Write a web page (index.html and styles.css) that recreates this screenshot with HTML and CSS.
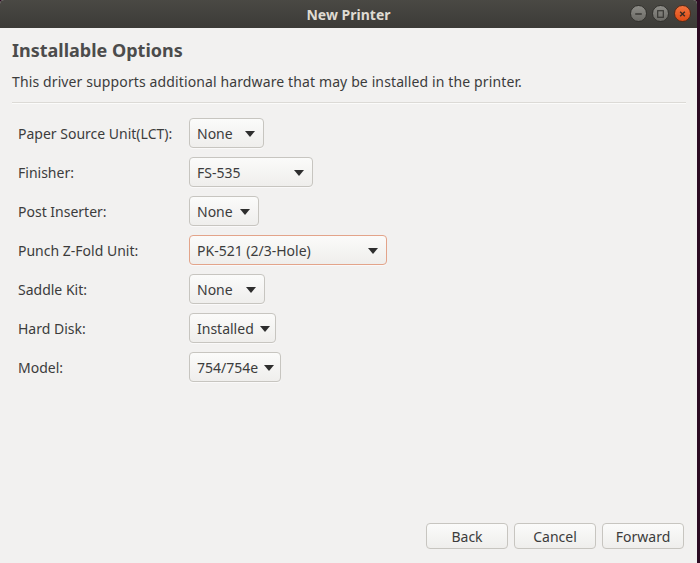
FILE: index.html
```html
<!DOCTYPE html>
<html>
<head>
<meta charset="utf-8">
<title>New Printer</title>
<link rel="stylesheet" href="styles.css">
</head>
<body>
<div class="window">
  <div class="titlebar">
    <span class="title">New Printer</span>
    <div class="wm-buttons">
      <span class="wm wm-min"><svg width="16" height="16" viewBox="0 0 16 16"><path d="M4.5 8h7" stroke="#3a3935" stroke-width="1.6"/></svg></span>
      <span class="wm wm-max"><svg width="16" height="16" viewBox="0 0 16 16"><rect x="5" y="4.5" width="6" height="7" fill="none" stroke="#3a3935" stroke-width="1.3"/></svg></span>
      <span class="wm wm-close"><svg width="16" height="16" viewBox="0 0 16 16"><path d="M5.5 5.5l5 5M10.5 5.5l-5 5" stroke="#3a2a22" stroke-width="1.5"/></svg></span>
    </div>
  </div>
  <div class="content">
    <h1 class="heading">Installable Options</h1>
    <p class="desc">This driver supports additional hardware that may be installed in the printer.</p>
    <div class="sep"></div>
    <div class="options">
      <span class="label">Paper Source Unit(LCT):</span>
      <div class="combo w-75"><span>None</span><i class="arrow"></i></div>
      <span class="label">Finisher:</span>
      <div class="combo w-124"><span>FS-535</span><i class="arrow"></i></div>
      <span class="label">Post Inserter:</span>
      <div class="combo w-70"><span>None</span><i class="arrow"></i></div>
      <span class="label">Punch Z-Fold Unit:</span>
      <div class="combo w-198 focused"><span>PK-521 (2/3-Hole)</span><i class="arrow"></i></div>
      <span class="label">Saddle Kit:</span>
      <div class="combo w-76"><span>None</span><i class="arrow"></i></div>
      <span class="label">Hard Disk:</span>
      <div class="combo w-87"><span>Installed</span><i class="arrow"></i></div>
      <span class="label">Model:</span>
      <div class="combo w-92"><span>754/754e</span><i class="arrow"></i></div>
    </div>
    <div class="spacer"></div>
    <div class="actions">
      <button class="btn">Back</button>
      <button class="btn">Cancel</button>
      <button class="btn">Forward</button>
    </div>
  </div>
</div>
</body>
</html>
```
FILE: styles.css
```css
* { box-sizing: border-box; }
html, body {
  margin: 0;
  padding: 0;
  width: 700px;
  height: 563px;
  overflow: hidden;
  background: #2c0b22;
}
body {
  font-family: "Noto Sans", "Open Sans", sans-serif;
  font-size: 14px;
  color: #3c3c3c;
}
.window {
  width: 697px;
  height: 563px;
  background: #f2f1f0;
  border-top-left-radius: 4px;
  border-top-right-radius: 4px;
  display: flex;
  flex-direction: column;
  overflow: hidden;
}
.titlebar {
  height: 28px;
  flex: none;
  background: linear-gradient(#4a4944, #3c3b37);
  display: flex;
  align-items: center;
  justify-content: center;
  position: relative;
}
.title {
  color: #dfdbd2;
  font-weight: bold;
  font-size: 14px;
}
.wm-buttons {
  position: absolute;
  right: 6px;
  top: 5px;
  display: flex;
  gap: 5px;
}
.wm {
  width: 17px;
  height: 17px;
  border-radius: 50%;
  display: flex;
  align-items: center;
  justify-content: center;
  background: linear-gradient(#8d8c87, #6c6b66);
  border: 1px solid #33322e;
}
.wm-close {
  background: linear-gradient(#f2733e, #de4c16);
  border-color: #5a2a16;
}
.content {
  flex: 1;
  display: flex;
  flex-direction: column;
  padding: 0 11px 14px 12px;
}
.heading {
  margin: 11px 0 0;
  font-size: 18px;
  font-weight: bold;
  line-height: 22px;
  color: #4c4c4c;
}
.desc {
  margin: 11px 0 0;
  line-height: 20px;
  letter-spacing: 0.12px;
  color: #3c3c3c;
}
.sep {
  margin-top: 10px;
  height: 2px;
  border-top: 1px solid #dcdad6;
  border-bottom: 1px solid #fbfbfa;
}
.options {
  margin-top: 14px;
  padding-left: 6px;
  display: grid;
  grid-template-columns: 171px auto;
  grid-auto-rows: 30px;
  row-gap: 9px;
  align-items: center;
  justify-items: start;
}
.label {
  color: #3c3c3c;
}
.combo {
  height: 30px;
  border: 1px solid #c7c5c0;
  border-radius: 4px;
  background: linear-gradient(#fbfbfa, #efeeec);
  display: flex;
  align-items: center;
  justify-content: space-between;
  gap: 6px;
  padding: 0 8px 0 7px;
  box-shadow: 0 1px 0 rgba(255,255,255,0.6);
}
.combo span {
  white-space: nowrap;
}
.combo.focused {
  border-color: #e3a48a;
}
.arrow {
  flex: none;
  width: 0;
  height: 0;
  border-left: 5px solid transparent;
  border-right: 5px solid transparent;
  border-top: 6px solid #2e2e2e;
  margin-top: 1px;
}
.w-70 { width: 70px; }
.w-75 { width: 75px; }
.w-76 { width: 76px; }
.w-87 { width: 87px; }
.w-92 { width: 92px; }
.w-124 { width: 124px; }
.w-198 { width: 198px; }
.spacer { flex: 1; }
.actions {
  display: flex;
  justify-content: flex-end;
  gap: 6px;
  padding-right: 2px;
}
.btn {
  width: 82px;
  height: 26px;
  font-family: inherit;
  font-size: 14px;
  color: #3c3c3c;
  border: 1px solid #c7c5c0;
  border-radius: 4px;
  background: linear-gradient(#fbfbfa, #efeeec);
  padding: 0;
}
```
